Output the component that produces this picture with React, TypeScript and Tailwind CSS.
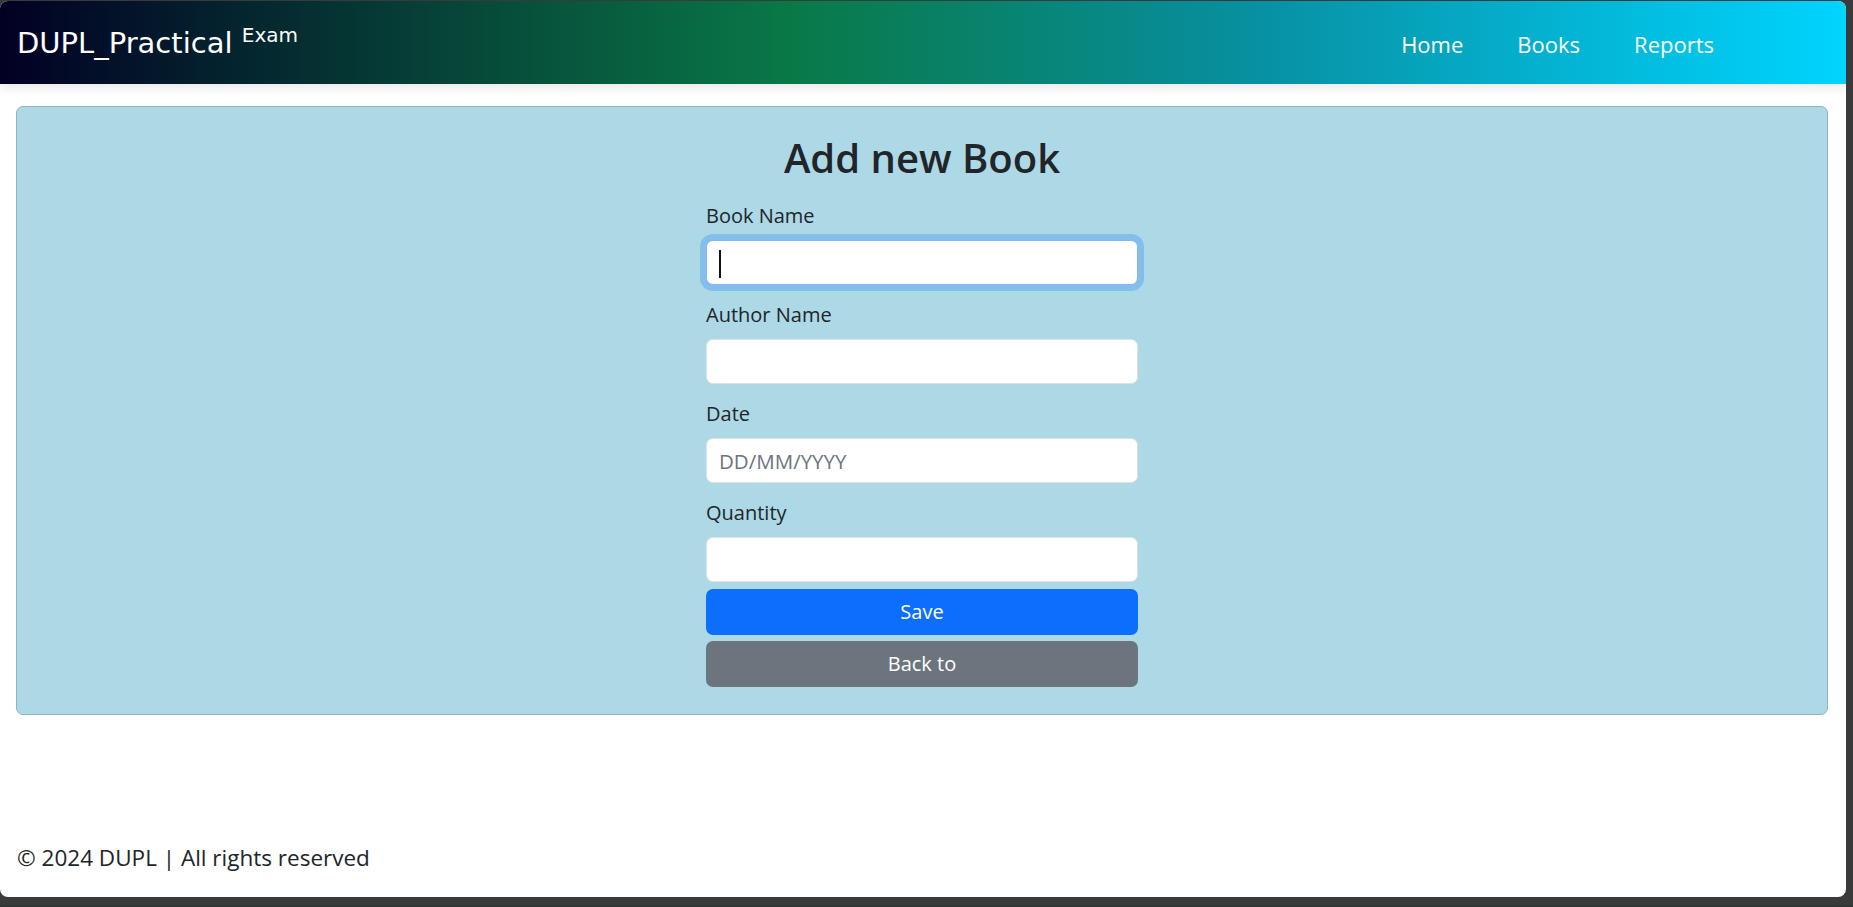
import React from "react";

const fields = [
  { label: "Book Name", placeholder: "", focused: true },
  { label: "Author Name", placeholder: "", focused: false },
  { label: "Date", placeholder: "DD/MM/YYYY", focused: false },
  { label: "Quantity", placeholder: "", focused: false },
];

function Field({ label, placeholder, focused }: { label: string; placeholder: string; focused: boolean }) {
  return (
    <div className="flex flex-col">
      <label className="mb-[9px] text-[20px] leading-[30px] text-[#212529]">{label}</label>
      <div className="relative">
        <input
          readOnly
          placeholder={placeholder}
          className={
            focused
              ? "h-[45px] w-full rounded-[7px] border border-[#86b7fe] bg-white pl-[12px] text-[20px] text-[#212529] shadow-[0_0_0_6px_rgba(13,110,253,0.25)] outline-none caret-transparent"
              : "h-[45px] w-full rounded-[7px] border border-[#dee2e6] bg-white pl-[12px] text-[20.5px] text-[#212529] outline-none placeholder:text-[#6c757d]"
          }
        />
        {focused && <span className="absolute left-[13px] top-[10px] h-[28px] w-[2px] bg-[#111]" />}
      </div>
    </div>
  );
}

export default function App() {
  return (
    <div className="flex h-[907px] w-full flex-col bg-[#3a3a3a] pt-[1px] font-['Open_Sans',sans-serif]">
      <div className="flex h-[896px] w-[1846px] flex-col overflow-hidden rounded-[8px] bg-white">
        <header className="relative z-10 flex h-[83px] shrink-0 items-center justify-between bg-[linear-gradient(90deg,#020024_0%,#097947_43%,#0890a2_68%,#00d4ff_100%)] pl-[17px] pr-[132px] shadow-[0_4px_10px_rgba(0,0,0,0.09)]">
          <a className="whitespace-nowrap font-['Comic_Sans_MS','DejaVu_Sans',sans-serif] text-[29px] text-white">
            DUPL_Practical <span className="align-[11px] text-[20px]">Exam</span>
          </a>
          <nav className="flex gap-[54px] pt-[4px] text-[22px] text-white">
            <a>Home</a>
            <a>Books</a>
            <a>Reports</a>
          </nav>
        </header>

        <main className="flex-1 pl-[16px] pr-[18px] pt-[22px]">
          <div className="flex flex-col items-center rounded-[7px] border border-[#8db5c2] bg-[#add8e6] pb-[27px] pt-[27px]">
            <h2 className="text-[40px] font-semibold leading-[1.2] text-[#212529]">Add new Book</h2>
            <form className="mt-[19px] flex w-[432px] flex-col">
              <div className="flex flex-col gap-[15px]">
                {fields.map((f) => (
                  <Field key={f.label} {...f} />
                ))}
              </div>
              <button type="button" className="mt-[7px] h-[46px] rounded-[7px] bg-[#0d6efd] text-[20px] text-white">
                Save
              </button>
              <button type="button" className="mt-[6px] h-[46px] rounded-[7px] bg-[#6c757d] text-[20px] text-white">
                Back to
              </button>
            </form>
          </div>
        </main>

        <footer className="px-[17px] pb-[23px] text-[22.5px] leading-[33px] text-[#212529]">© 2024 DUPL | All rights reserved</footer>
      </div>
      <div className="flex-1" />
      <div className="h-[1px] bg-[#26352a]" />
    </div>
  );
}
